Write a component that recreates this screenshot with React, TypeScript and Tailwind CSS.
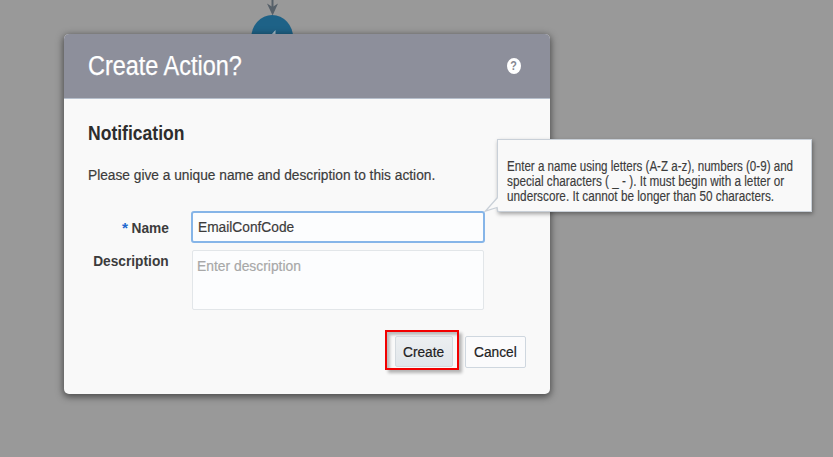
import type { ReactNode } from "react";

function Narrow({ children, className = "origin-left scale-x-[0.892]" }: { children: ReactNode; className?: string }) {
  return <span className={`inline-block whitespace-nowrap ${className}`}>{children}</span>;
}

function FlowNode() {
  return (
    <svg className="absolute left-[240px] top-0" width="70" height="66" viewBox="0 0 70 66">
      <path d="M32.5 0V11" stroke="#566069" strokeWidth="2" />
      <path d="M27 3.5L32.5 7L38 3.5L32.6 15.5Z" fill="#566069" />
      <ellipse cx="32.2" cy="38" rx="21" ry="23" fill="#1e6287" />
      <path d="M31 35L35.5 30V38H31Z" fill="#a9bfcc" />
    </svg>
  );
}

function Tooltip() {
  return (
    <div className="absolute left-[497px] top-[139px] h-[73px] w-[315px] border border-[#c9d0d8] bg-[#f9f9f9] pl-[9px] pt-[19px] text-[14px] leading-[15px] text-[#3c3c3c] shadow-[1px_2px_4px_rgba(0,0,0,0.35)] [-webkit-text-stroke:0.15px_#3c3c3c]">
      <svg className="absolute -left-[14px] top-[56px]" width="16" height="18" viewBox="0 0 16 18">
        <path d="M14 1.5L1.5 15L13.5 11.5L14 14.5H16V1Z" fill="#f9f9f9" />
        <path d="M13.5 1.5L1.5 15L13 11.5L13.8 15.5" fill="none" stroke="#c9d0d8" strokeWidth="1.3" />
      </svg>
      <div className="flex flex-col items-start">
        <Narrow className="origin-left scale-x-[0.828]">Enter a name using letters (A-Z a-z), numbers (0-9) and</Narrow>
        <Narrow className="origin-left scale-x-[0.84]">special characters ( _ - ). It must begin with a letter or</Narrow>
        <Narrow className="origin-left scale-x-[0.841]">underscore. It cannot be longer than 50 characters.</Narrow>
      </div>
    </div>
  );
}

export default function App() {
  return (
    <div className="relative h-[457px] w-[833px] overflow-hidden bg-[#999999] pl-[64px] pt-[34px] font-['Liberation_Sans',Arial,sans-serif] text-[15.4px] text-[#3c3c3c]">
      <FlowNode />
      <section className="relative flex h-[360px] w-[486px] flex-col rounded-[5px] bg-[#f9f9f9] shadow-[0_2px_7px_1px_rgba(0,0,0,0.5)]">
        <header className="flex h-[65px] items-center justify-between rounded-t-[5px] border-b border-[#b6bfcc] bg-[#8d8f9b] pl-6 pr-[29px] text-white">
          <h1 className="text-[27px] leading-8 [-webkit-text-stroke:0.25px_white]">
            <Narrow className="origin-left scale-x-[0.868]">Create Action?</Narrow>
          </h1>
          <span className="flex h-4 w-[14px] items-center justify-center rounded-[50%] bg-white text-[12px] font-bold leading-4 text-[#858792]">
            <span className="scale-x-90">?</span>
          </span>
        </header>
        <div className="flex flex-col pl-6">
          <h2 className="mt-[22px] text-[19.5px] font-bold leading-6 text-[#2d2d2d]">
            <Narrow className="origin-left scale-x-[0.9]">Notification</Narrow>
          </h2>
          <p className="mt-[20px] leading-5 [-webkit-text-stroke:0.2px_#3c3c3c]">
            <Narrow>Please give a unique name and description to this action.</Narrow>
          </p>
        </div>
        <div className="mt-[26px] flex h-[32px]">
          <label className="flex w-[105px] items-center justify-end pt-[2px] font-bold leading-5">
            <span className="-mr-[1px] text-[#2268cf]">*</span>
            <Narrow className="origin-right scale-x-[0.892]">Name</Narrow>
          </label>
          <div className="ml-[22px] flex w-[294px] items-center rounded-[3px] border-2 border-[#86b5e8] bg-[#fcfdfe] pl-[5px] [-webkit-text-stroke:0.2px_#3c3c3c]">
            <Narrow>EmailConfCode</Narrow>
          </div>
        </div>
        <div className="mt-[7px] flex h-[60px]">
          <label className="flex w-[105px] justify-end pt-[1px] font-bold leading-5">
            <Narrow className="origin-right scale-x-[0.892]">Description</Narrow>
          </label>
          <div className="ml-[23px] w-[292px] rounded-[2px] border border-[#e2e6e9] bg-[#fcfdfe] pl-1 pt-[5px] leading-5 text-[#a8a8a8] [-webkit-text-stroke:0.2px_#a8a8a8]">
            <Narrow className="origin-left scale-x-[0.9]">Enter description</Narrow>
          </div>
        </div>
        <div className="ml-[321px] mt-[20px] flex items-center gap-[6px] [-webkit-text-stroke:0.2px_#222]">
          <div className="flex h-[40px] w-[74px] items-center border-2 border-[#f20000] pl-[8px] pt-[3px] shadow-[3px_3px_3px_rgba(0,0,0,0.28),inset_3px_3px_3px_rgba(0,0,0,0.25)]">
            <button className="flex h-[31px] w-[58px] items-center rounded-[2px] border border-[#d4dadf] bg-linear-to-b from-[#eceff1] to-[#e1e6ea] pl-[7px] text-[#222]">
              <Narrow>Create</Narrow>
            </button>
          </div>
          <button className="mt-[3px] flex h-[32px] w-[61px] items-center rounded-[2px] border border-[#cfd7df] bg-[#fbfbfc] pl-[8px] text-[#222]">
            <Narrow>Cancel</Narrow>
          </button>
        </div>
      </section>
      <Tooltip />
    </div>
  );
}
